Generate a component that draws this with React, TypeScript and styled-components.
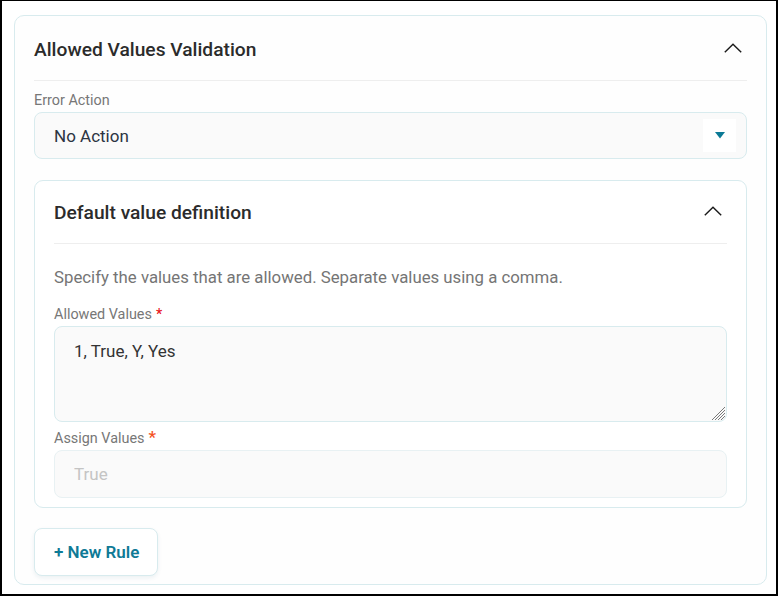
import React from "react";
import styled, { createGlobalStyle } from "styled-components";

const Global = createGlobalStyle`
  html, body { margin: 0; padding: 0; background: #ffffff; }
  * { box-sizing: border-box; }
  body { font-family: Roboto, "Liberation Sans", Arial, sans-serif; }
`;

const Frame = styled.div`
  width: 778px;
  height: 596px;
  border-style: solid;
  border-color: #000;
  border-width: 1px 2px 2px 2px;
  padding: 14px 9px 9px 12px;
  background: #fff;
`;

const Card = styled.section<{ $inner?: boolean }>`
  border: 1px solid #d8ebee;
  border-radius: ${(p) => (p.$inner ? "9px" : "10px")};
  background: ${(p) => (p.$inner ? "#ffffff" : "#fefefe")};
  padding: ${(p) => (p.$inner ? "0 19px 9px 19px" : "0 19px 8px 19px")};
  display: flex;
  flex-direction: column;
  flex-shrink: 0;
  height: ${(p) => (p.$inner ? "auto" : "100%")};
`;

const Header = styled.div<{ $h: number; $pt: number }>`
  height: ${(p) => p.$h}px;
  flex-shrink: 0;
  padding-top: ${(p) => p.$pt}px;
  display: flex;
  align-items: center;
  justify-content: space-between;
  border-bottom: 1px solid #eeeeee;
`;

const Title = styled.h2`
  margin: 0;
  font-size: 19.2px;
  font-weight: 500;
  color: #2b2b2b;
`;

const ChevronBtn = styled.span`
  display: inline-flex;
  width: 18px;
  height: 10px;
  margin-right: 5px;
  margin-bottom: 3px;
`;

const Label = styled.label<{ $mt: number }>`
  display: block;
  flex-shrink: 0;
  height: 16px;
  margin-top: ${(p) => p.$mt}px;
  font-size: 14.4px;
  line-height: 18px;
  color: #777777;
`;

const Star = styled.span<{ $color: string; $size: number }>`
  color: ${(p) => p.$color};
  font-size: ${(p) => p.$size}px;
  line-height: 0;
  margin-left: 4px;
  font-weight: 500;
`;

const Select = styled.div`
  margin-top: 4px;
  height: 47px;
  flex-shrink: 0;
  border: 1px solid #d8ebee;
  border-radius: 8px;
  background: #fafafa;
  display: flex;
  align-items: center;
  justify-content: space-between;
  padding: 0 10px 0 19px;
  font-size: 17px;
  color: #2c3442;
`;

const ArrowBox = styled.span`
  width: 33px;
  height: 33px;
  background: #ffffff;
  display: inline-flex;
  align-items: center;
  justify-content: center;
`;

const Help = styled.p`
  margin: 23px 0 0;
  font-size: 16.8px;
  line-height: 20px;
  color: #757575;
`;

const AreaWrap = styled.div`
  position: relative;
  margin-top: 4px;
  flex-shrink: 0;
`;

const TextArea = styled.textarea`
  display: block;
  width: 100%;
  height: 96px;
  border: 1px solid #d8ebee;
  border-radius: 8px;
  background: #fafafa;
  padding: 14px 19px;
  font-family: Roboto, "Liberation Sans", Arial, sans-serif;
  font-size: 17px;
  line-height: 20px;
  color: #333;
  resize: none;
  outline: none;
`;

const Grip = styled.svg`
  position: absolute;
  right: 1px;
  bottom: 1px;
  pointer-events: none;
`;

const Input = styled.input`
  display: block;
  flex-shrink: 0;
  margin-top: 4px;
  width: 100%;
  height: 48px;
  border: 1px solid #e8f1f3;
  border-radius: 8px;
  background: #fafafa;
  padding: 0 19px;
  font-family: Roboto, "Liberation Sans", Arial, sans-serif;
  font-size: 17px;
  color: #333;
  outline: none;
  &::placeholder { color: #c4c4c4; }
`;

const Spacer = styled.div<{ $h: number }>`
  height: ${(p) => p.$h}px;
  flex-shrink: 0;
`;

const NewRule = styled.button`
  align-self: flex-start;
  flex-shrink: 0;
  width: 124px;
  height: 48px;
  border: 1px solid #d8ebee;
  border-radius: 8px;
  background: #ffffff;
  box-shadow: 0 2px 4px rgba(20, 90, 110, 0.08);
  font-family: Roboto, "Liberation Sans", Arial, sans-serif;
  font-size: 17px;
  font-weight: 600;
  color: #0f7a96;
  text-align: left;
  padding: 0 0 0 19px;
  cursor: pointer;
`;

const Chevron = () => (
  <ChevronBtn>
    <svg width="18" height="10" viewBox="0 0 18 10" fill="none">
      <path d="M0.8 9.3 L9 1.2 L17.2 9.3" stroke="#1a1a1a" strokeWidth="1.4" />
    </svg>
  </ChevronBtn>
);

export default function App() {
  return (
    <>
      <Global />
      <Frame>
        <Card>
          <Header $h={65} $pt={2}>
            <Title>Allowed Values Validation</Title>
            <Chevron />
          </Header>
          <Label $mt={11}>Error Action</Label>
          <Select>
            <span>No Action</span>
            <ArrowBox>
              <svg width="10" height="7" viewBox="0 0 10 7">
                <path d="M0 0 H10 L5 6.5 Z" fill="#0b7a96" />
              </svg>
            </ArrowBox>
          </Select>
          <Spacer $h={21} />
          <Card $inner>
            <Header $h={63} $pt={0}>
              <Title>Default value definition</Title>
              <Chevron />
            </Header>
            <Help>Specify the values that are allowed. Separate values using a comma.</Help>
            <Label $mt={19}>
              Allowed Values<Star $color="#e8141b" $size={14}>*</Star>
            </Label>
            <AreaWrap>
              <TextArea defaultValue="1, True, Y, Yes" />
              <Grip width="15" height="15" viewBox="0 0 15 15">
                <g stroke="#7a7a7a" strokeWidth="1">
                  <path d="M14 1 L1 14" />
                  <path d="M14 4 L4 14" />
                  <path d="M14 7 L7 14" />
                  <path d="M14 10 L10 14" />
                </g>
              </Grip>
            </AreaWrap>
            <Label $mt={8}>
              Assign Values<Star $color="#f4511e" $size={17}>*</Star>
            </Label>
            <Input placeholder="True" />
          </Card>
          <Spacer $h={20} />
          <NewRule>+ New Rule</NewRule>
        </Card>
      </Frame>
    </>
  );
}
